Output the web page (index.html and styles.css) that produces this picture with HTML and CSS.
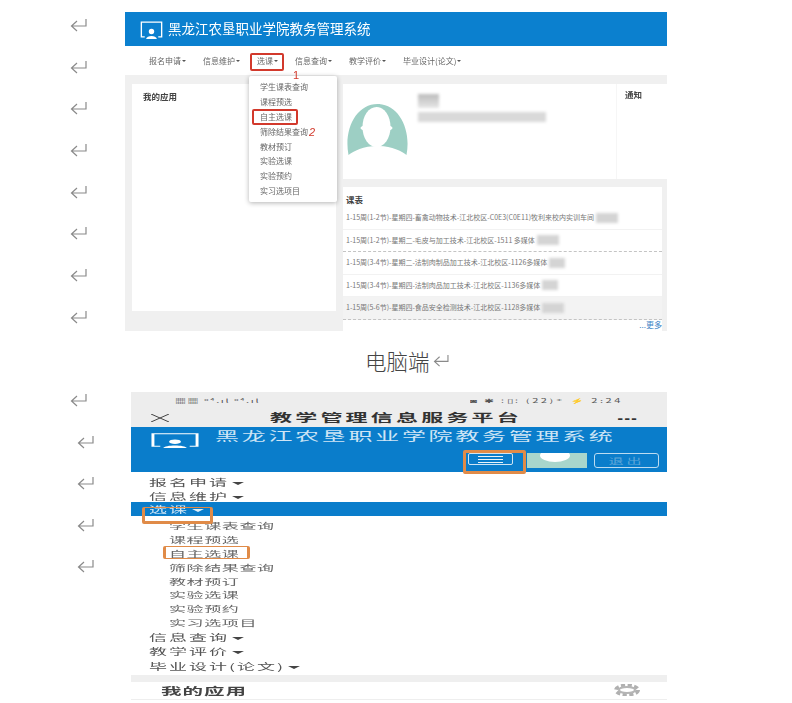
FILE: index.html
```html
<!DOCTYPE html>
<html lang="zh">
<head>
<meta charset="utf-8">
<title>选课说明</title>
<link rel="stylesheet" href="styles.css">
</head>
<body>
<main class="doc">
  <section class="fig">
    <div class="marks">
      <svg class="mark" viewBox="0 0 17 14"><path d="M16 1V8H2M7 3 1.5 8 7 13"/></svg>
      <svg class="mark" viewBox="0 0 17 14"><path d="M16 1V8H2M7 3 1.5 8 7 13"/></svg>
      <svg class="mark" viewBox="0 0 17 14"><path d="M16 1V8H2M7 3 1.5 8 7 13"/></svg>
      <svg class="mark" viewBox="0 0 17 14"><path d="M16 1V8H2M7 3 1.5 8 7 13"/></svg>
      <svg class="mark" viewBox="0 0 17 14"><path d="M16 1V8H2M7 3 1.5 8 7 13"/></svg>
      <svg class="mark" viewBox="0 0 17 14"><path d="M16 1V8H2M7 3 1.5 8 7 13"/></svg>
      <svg class="mark" viewBox="0 0 17 14"><path d="M16 1V8H2M7 3 1.5 8 7 13"/></svg>
      <svg class="mark" viewBox="0 0 17 14"><path d="M16 1V8H2M7 3 1.5 8 7 13"/></svg>
    </div>
    <div class="desk">
      <header class="desk-head">
        <svg class="desk-logo" viewBox="0 0 34 28"><path class="logo-line" d="M7 25H2V3H32V25H27"/><circle class="logo-fill" cx="17" cy="17" r="4"/><path class="logo-fill" d="M9 28C10 22 24 22 25 28Z"/></svg>
        <span>黑龙江农垦职业学院教务管理系统</span>
      </header>
      <nav class="desk-nav">
        <span class="desk-link">报名申请</span>
        <span class="desk-link">信息维护</span>
        <span class="desk-link">选课</span>
        <span class="desk-link">信息查询</span>
        <span class="desk-link">教学评价</span>
        <span class="desk-link">毕业设计(论文)</span>
      </nav>
      <div class="desk-body">
        <aside class="apps"><h2 class="panel-title">我的应用</h2></aside>
        <div class="desk-right">
          <div class="profile">
            <div class="profile-main">
              <svg class="avatar" viewBox="0 0 62 52"><path class="avatar-bg" d="M2 51C-3 25 10 0 31 0C52 0 65 25 60 51C55 47 45 42 31 42C17 42 7 47 2 51Z"/><ellipse class="avatar-head" cx="30" cy="23" rx="14" ry="20"/><ellipse class="avatar-head" cx="30" cy="24" rx="16" ry="4"/></svg>
              <div class="blur-name"></div>
              <div class="blur-info"></div>
            </div>
            <div class="notice"><h2 class="panel-title">通知</h2></div>
          </div>
          <div class="timetable">
            <h2 class="panel-title table-title">课表</h2>
            <p class="row row-solid">1-15周(1-2节)-星期四-畜禽动物技术-江北校区-C0E3(C0E11)牧利来校内实训车间<i class="smudge"></i></p>
            <p class="row row-dash">1-15周(1-2节)-星期二-毛皮与加工技术-江北校区-1511 多媒体<i class="smudge"></i></p>
            <p class="row row-solid">1-15周(3-4节)-星期二-法制肉制品加工技术-江北校区-1126多媒体<i class="smudge small"></i></p>
            <p class="row row-plain">1-15周(3-4节)-星期四-法制肉品加工技术-江北校区-1136多媒体<i class="smudge small"></i></p>
            <p class="row row-hover">1-15周(5-6节)-星期四-食品安全检测技术-江北校区-1128多媒体<i class="smudge"></i></p>
            <a class="more">...更多</a>
          </div>
        </div>
      </div>
      <div class="red-box nav-mark"></div>
      <ul class="drop">
        <li>学生课表查询</li>
        <li>课程预选</li>
        <li>自主选课</li>
        <li>筛除结果查询</li>
        <li>教材预订</li>
        <li>实验选课</li>
        <li>实验预约</li>
        <li>实习选项目</li>
      </ul>
      <div class="red-box item-mark"></div>
      <span class="step step-one">1</span>
      <span class="step step-two">2</span>
    </div>
  </section>

  <p class="caption">电脑端<svg class="caption-mark" viewBox="0 0 17 14"><path d="M16 1V8H2M7 3 1.5 8 7 13"/></svg></p>

  <section class="fig">
    <div class="marks marks-low">
      <svg class="mark" viewBox="0 0 17 14"><path d="M16 1V8H2M7 3 1.5 8 7 13"/></svg>
      <svg class="mark shifted" viewBox="0 0 17 14"><path d="M16 1V8H2M7 3 1.5 8 7 13"/></svg>
      <svg class="mark shifted" viewBox="0 0 17 14"><path d="M16 1V8H2M7 3 1.5 8 7 13"/></svg>
      <svg class="mark shifted" viewBox="0 0 17 14"><path d="M16 1V8H2M7 3 1.5 8 7 13"/></svg>
      <svg class="mark shifted" viewBox="0 0 17 14"><path d="M16 1V8H2M7 3 1.5 8 7 13"/></svg>
    </div>
    <div class="phone">
      <div class="status"><span class="sq status-left">▦▦ ᵒ⁴.ıl ᵒ⁴.ıl</span><span class="sq status-right">◙ ✱ ⫶▯⫶ (22)⁺ ⚡ 2:24</span></div>
      <div class="titlebar">
        <svg class="close" viewBox="0 0 20 8" preserveAspectRatio="none"><path d="M1 0 19 8M19 0 1 8"/></svg>
        <span class="sq title-text">教学管理信息服务平台</span>
        <span class="sq dots">---</span>
      </div>
      <header class="phone-head">
        <div class="brand">
          <svg class="phone-logo" viewBox="0 0 34 28" preserveAspectRatio="none"><path class="logo-line" d="M7 25H2V3H32V25H27"/><circle class="logo-fill" cx="17" cy="17" r="4"/><path class="logo-fill" d="M9 28C10 22 24 22 25 28Z"/></svg>
          <span class="sq brand-text">黑龙江农垦职业学院教务管理系统</span>
        </div>
        <div class="tools">
          <div class="burger"><i></i><i></i><i></i></div>
          <div class="mini-avatar"><i></i></div>
          <div class="exit"><span class="sq">退出</span></div>
        </div>
      </header>
      <nav class="phone-nav">
        <div class="menu-row"><span class="sq menu-text">报名申请<i class="caret"></i></span></div>
        <div class="menu-row"><span class="sq menu-text">信息维护<i class="caret"></i></span></div>
        <div class="menu-row active"><span class="sq menu-text">选课<i class="caret"></i></span></div>
        <ul class="sub">
          <li><span class="sq sub-text">学生课表查询</span></li>
          <li><span class="sq sub-text">课程预选</span></li>
          <li><span class="sq sub-text">自主选课</span></li>
          <li><span class="sq sub-text">筛除结果查询</span></li>
          <li><span class="sq sub-text">教材预订</span></li>
          <li><span class="sq sub-text">实验选课</span></li>
          <li><span class="sq sub-text">实验预约</span></li>
          <li><span class="sq sub-text">实习选项目</span></li>
        </ul>
        <div class="menu-row low"><span class="sq menu-text">信息查询<i class="caret"></i></span></div>
        <div class="menu-row low"><span class="sq menu-text">教学评价<i class="caret"></i></span></div>
        <div class="menu-row low"><span class="sq menu-text">毕业设计(论文)<i class="caret"></i></span></div>
      </nav>
      <div class="phone-gap"></div>
      <div class="phone-apps">
        <span class="sq apps-text">我的应用</span>
        <svg class="gear" viewBox="0 0 30 12" preserveAspectRatio="none"><ellipse class="gear-teeth" cx="15" cy="6" rx="11" ry="4.5"/><ellipse class="gear-ring" cx="15" cy="6" rx="8" ry="3"/></svg>
      </div>
      <div class="orange burger-mark"></div>
      <div class="orange pick-mark"></div>
      <div class="orange sub-mark"></div>
    </div>
  </section>
</main>
</body>
</html>
```
FILE: styles.css
```css
* { box-sizing: border-box; }
html, body { margin: 0; background: #fff; }
body { font-family: "Noto Sans CJK SC", "Liberation Sans", sans-serif; color: #444; }
ul { list-style: none; margin: 0; padding: 0; }
p, h2 { margin: 0; }
.doc { width: 792px; height: 703px; overflow: hidden; padding-top: 12px; }
.fig { display: flex; }

/* paragraph marks */
.marks { width: 125px; flex: none; display: flex; flex-direction: column; gap: 27.7px; padding: 6px 0 0 70px; }
.marks-low { width: 131px; gap: 27.5px; padding-top: 1px; }
.mark, .caption-mark { width: 17px; height: 14px; fill: none; stroke: #8a8a8a; stroke-width: 1.2; flex: none; }
.shifted { margin-left: 7px; }

/* desktop screenshot */
.desk { position: relative; width: 542px; height: 319px; filter: blur(.5px); }
.desk-head { height: 34px; background: #0b80cf; color: #fff; display: flex; align-items: center; gap: 5px; padding-left: 15px; font-size: 13.5px; line-height: 1; }
.desk-logo { width: 23px; height: 19px; }
.logo-line { fill: none; stroke: #fff; stroke-width: 2; }
.logo-fill { fill: #fff; }
.desk-nav { height: 29px; display: flex; align-items: center; gap: 17px; padding-left: 24px; font-size: 8px; color: #666; }
.desk-link { display: flex; align-items: center; gap: 1px; }
.desk-link::after { content: ""; border: 2px solid transparent; border-top: 2.5px solid #555; border-bottom: 0; }
.desk-body { height: 256px; background: #f0f0f0; display: flex; padding: 9px 0 0 7px; }
.apps { width: 204px; height: 227px; background: #fff; padding: 7px 11px; flex: none; }
.panel-title { font-size: 8.5px; font-weight: 700; line-height: 11px; color: #444; }
.desk-right { width: 331px; margin-left: 7px; flex: none; }
.profile { height: 95px; background: #fff; display: flex; }
.profile-main { position: relative; width: 274px; border-right: 1px solid #f6f6f6; flex: none; }
.avatar { position: absolute; left: 3px; top: 20px; width: 63px; height: 52px; }
.avatar-bg { fill: #9dcfc4; }
.avatar-head { fill: #fff; }
.blur-name { position: absolute; left: 75px; top: 10px; width: 21px; height: 14px; background: linear-gradient(#bbb, #e6e6e6); filter: blur(1.5px); }
.blur-info { position: absolute; left: 75px; top: 28px; width: 128px; height: 10px; background: #d9d9d9; filter: blur(1.5px); }
.notice { padding: 5px 8px; }
.timetable { position: relative; width: 319px; height: 144px; background: #fff; margin-top: 8px; font-size: 7px; color: #777; }
.table-title { padding: 7px 3px 2px; height: 20px; }
.row { height: 22.5px; padding-left: 3px; line-height: 21px; white-space: nowrap; display: flex; align-items: center; font-size: 7px; }
.row-solid { border-bottom: 1px solid #f2f2f2; }
.row-dash { border-bottom: 1px dashed #c4c4c4; }
.row-plain { border-bottom: 1px solid #f2f2f2; }
.row-hover { background: #f3f3f3; border-bottom: 1px dashed #c4c4c4; }
.smudge { display: block; width: 22px; height: 10px; margin-left: 2px; background: #d4d4d4; filter: blur(1.5px); }
.smudge.small { width: 16px; }
.more { position: absolute; right: 0; top: 132px; font-size: 8px; line-height: 12px; color: #3d85c6; }
.red-box { position: absolute; border: 2px solid #d2392c; border-radius: 2px; }
.nav-mark { left: 125px; top: 41px; width: 34px; height: 18px; }
.drop { position: absolute; left: 124px; top: 64px; width: 88px; height: 126px; padding-top: 4px; background: #fff; border-radius: 2px; box-shadow: 0 1px 5px rgba(0, 0, 0, .3); font-size: 8px; color: #666; }
.drop li { height: 14.9px; line-height: 14.9px; padding-left: 11px; }
.item-mark { left: 127px; top: 97px; width: 46px; height: 16px; }
.step { position: absolute; color: #d2392c; font: 11px/10px "Liberation Sans", sans-serif; }
.step-one { left: 168px; top: 58px; }
.step-two { left: 184px; top: 115px; font-style: italic; }

/* caption */
.caption { height: 61px; margin: 0; padding: 0 0 2px 365px; display: flex; align-items: center; gap: 3px; font-size: 21.5px; font-weight: 300; line-height: 30px; color: #444; }
.caption-mark { width: 16px; height: 13px; }

/* phone screenshot */
.phone { position: relative; width: 536px; height: 311px; filter: blur(.65px); }
.sq { display: inline-block; transform: scaleY(.5); white-space: nowrap; }
.status { height: 16px; background: #ededed; display: flex; justify-content: space-between; align-items: center; padding: 0 44px; font-size: 11px; line-height: 16px; color: #555; }
.status-left { letter-spacing: 1.6px; }
.status-right { letter-spacing: 2.6px; }
.titlebar { height: 19px; background: #ededed; display: flex; align-items: center; padding: 0 29px 0 19px; }
.close { width: 20px; height: 8px; fill: none; stroke: #444; stroke-width: 1; flex: none; }
.title-text { margin-left: 100px; font-size: 22px; letter-spacing: 3.2px; line-height: 19px; font-weight: 700; color: #333; flex: none; }
.dots { margin-left: auto; font-size: 16px; line-height: 19px; letter-spacing: 1px; font-weight: 700; color: #333; transform: none; }
.phone-head { height: 45px; background: #0a7dcb; padding: 5px 8px 0 19px; }
.brand { display: flex; align-items: flex-start; gap: 15px; height: 21px; color: #cfe5f5; }
.phone-logo { width: 50px; height: 16px; flex: none; }
.brand-text { font-size: 24px; letter-spacing: 2.7px; line-height: 14px; margin-top: -3px; }
.tools { display: flex; align-items: flex-start; padding-left: 318px; }
.burger { width: 45px; height: 12px; border: 1px solid #cfe4f3; border-radius: 2px; display: flex; flex-direction: column; justify-content: center; gap: 2px; padding: 0 9px; }
.burger i { display: block; height: 1px; background: #e8f3fa; }
.mini-avatar { width: 60px; height: 15px; margin-left: 14px; background: #a9d6cc; position: relative; overflow: hidden; }
.mini-avatar i { position: absolute; left: 13px; top: -4px; width: 30px; height: 13px; border-radius: 50%; background: #fff; }
.exit { width: 65px; height: 15px; margin-left: 7px; border: 1px solid #bcdcf1; border-radius: 3px; display: flex; align-items: center; justify-content: center; font-size: 15px; color: #5fa6d8; line-height: 13px; letter-spacing: 3px; }
.phone-nav { padding-top: 3px; }
.menu-row { height: 13.5px; padding-left: 18px; line-height: 13.5px; }
.menu-row.low { height: 14.3px; line-height: 14.3px; }
.menu-text { font-size: 18px; letter-spacing: 2px; line-height: 14px; color: #555; }
.caret { display: inline-block; margin-left: 3px; vertical-align: middle; border: 6px solid transparent; border-top: 6px solid #444; border-bottom: 0; }
.menu-row.active { height: 14px; background: #0a7dcb; }
.active .menu-text { color: #cfe5f5; }
.active .caret { border-top-color: #e0eff9; }
.sub { padding-top: 2px; height: 114px; }
.sub li { height: 13.9px; line-height: 13.9px; padding-left: 38px; }
.sub-text { font-size: 17px; letter-spacing: .6px; line-height: 14px; color: #666; }
.phone-gap { height: 7px; margin-top: 2px; background: #efefef; }
.phone-apps { height: 18px; border-bottom: 1px solid #eee; display: flex; align-items: center; justify-content: space-between; padding: 0 25px 0 30px; }
.apps-text { font-size: 20.5px; letter-spacing: 1px; font-weight: 700; color: #444; line-height: 16px; }
.gear { width: 30px; height: 12px; }
.gear-teeth { fill: none; stroke: #b0b0b0; stroke-width: 4; stroke-dasharray: 4 2.4; }
.gear-ring { fill: none; stroke: #b5b5b5; stroke-width: 2; }
.orange { position: absolute; border: 3px solid #e08b48; border-radius: 2px; }
.burger-mark { left: 332px; top: 58px; width: 63px; height: 24px; }
.pick-mark { left: 11px; top: 115px; width: 71px; height: 17px; border-top-width: 1px; }
.sub-mark { left: 32px; top: 154px; width: 87px; height: 13px; border-width: 1.5px 3px; }
```
